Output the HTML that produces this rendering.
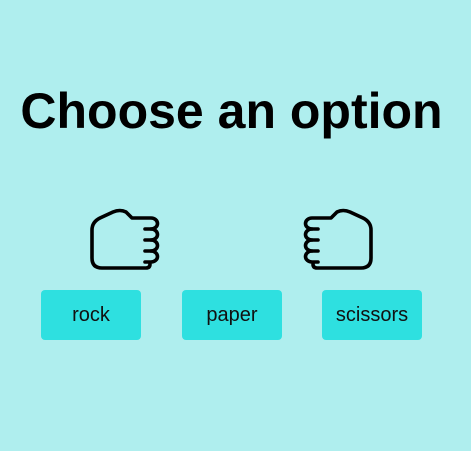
<!DOCTYPE html>
<html><head><style>
body{margin:0;width:471px;height:451px;background:#afeeee;font-family:"Liberation Sans",sans-serif;position:relative;overflow:hidden}
h1{position:absolute;left:-4px;width:471px;top:81px;margin:0;text-align:center;font-size:50px;font-weight:bold;line-height:60px;color:#000}
.b{position:absolute;top:290px;width:100px;height:50px;background:#2ee0e0;border-radius:4px;text-align:center;line-height:50px;font-size:20px;color:#111}
svg{position:absolute;left:0;top:0}
</style></head><body>
<h1>Choose an option</h1>
<svg width="471" height="451">
<g id="f" fill="none" stroke="#000" stroke-width="3.6" stroke-linecap="round" stroke-linejoin="round">
<path d="M150,262 L150,264 Q150,268 146,268 L102,268 Q92,268 92,258 L92,230 Q92,222 100,218 L113,212 Q120,209 126,212 L132,218 L151,218 A6.5,5.5 0 0 1 151,229 A6.5,5.5 0 0 1 151,240 A6.5,5.5 0 0 1 151,251 A6.5,5.5 0 0 1 151,262 L145,262"/>
<path d="M145,229 L151,229 M145,240 L151,240 M145,251 L151,251"/>
</g>
<use href="#f" transform="translate(463,0) scale(-1,1)"/>
</svg>
<div class="b" style="left:41px">rock</div>
<div class="b" style="left:182px">paper</div>
<div class="b" style="left:322px">scissors</div>
</body></html>
